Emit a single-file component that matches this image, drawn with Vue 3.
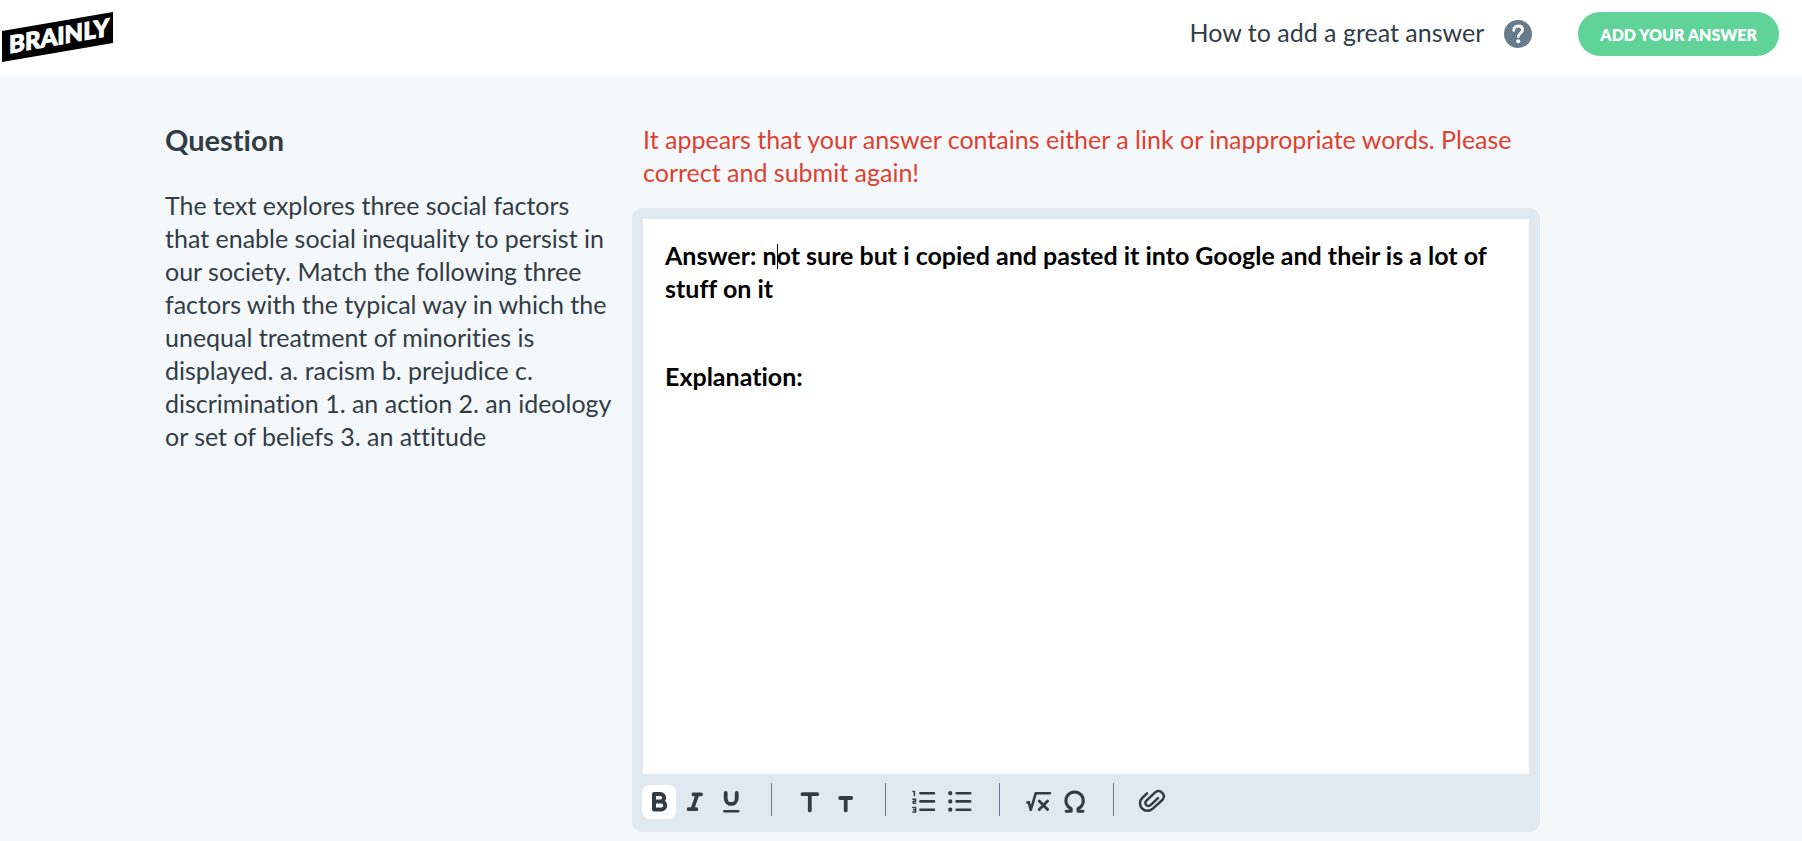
<script setup>
import { ref } from 'vue'

const error = ref('It appears that your answer contains either a link or inappropriate words. Please correct and submit again!')

const question = ref('The text explores three social factors that enable social inequality to persist in our society. Match the following three factors with the typical way in which the unequal treatment of minorities is displayed. a. racism b. prejudice c. discrimination 1. an action 2. an ideology or set of beliefs 3. an attitude')

const groups = [
    ['bold', 'italic', 'underline'],
    ['heading', 'subheading'],
    ['ordered list', 'bullet list'],
    ['equation', 'symbols'],
    ['attachment']
]

const active = ref('bold')

function toggle(tool) {
    active.value = active.value === tool ? '' : tool
}
</script>

<template>
    <div class="page">
        <header class="header">
            <a href="#" class="logo" aria-label="Brainly">
                <svg width="116" height="64" viewBox="0 0 116 64">
                    <polygon points="2,31 113,12 113,43 2,62" fill="#000" />
                    <text class="logo-text" x="9" y="55" transform="skewY(-10)">BRAINLY</text>
                </svg>
            </a>
            <a href="#" class="help">
                <span>How to add a great answer</span>
                <svg width="28" height="28" viewBox="0 0 28 28">
                    <circle cx="14" cy="14" r="14" fill="#687b8c" />
                    <path d="M9.7 10.4c0-2.7 1.8-4.4 4.4-4.4s4.4 1.6 4.4 4c0 3.3-4.2 3.2-4.2 6.6" fill="none" stroke="#fff" stroke-width="2.8" stroke-linecap="round" />
                    <circle cx="14.2" cy="21.3" r="2" fill="#fff" />
                </svg>
            </a>
            <button type="button" class="submit">ADD YOUR ANSWER</button>
        </header>

        <main class="content">
            <section class="question">
                <h1>Question</h1>
                <p>{{ question }}</p>
            </section>

            <section class="answer">
                <p class="error" role="alert">{{ error }}</p>
                <div class="editor">
                    <div class="editor-text" contenteditable="true" role="textbox" aria-multiline="true" aria-label="Your answer" spellcheck="false">
                        <p>Answer: n<span class="caret"></span>ot sure but i copied and pasted it into Google and their is a lot of stuff on it</p>
                        <p><br></p>
                        <p>Explanation:</p>
                    </div>
                    <div class="toolbar" role="toolbar" aria-label="Formatting">
                        <div v-for="group in groups" :key="group[0]" class="group">
                            <button
                                v-for="tool in group"
                                :key="tool"
                                type="button"
                                class="tool"
                                :class="active === tool && 'tool-active'"
                                :aria-label="tool"
                                :aria-pressed="active === tool"
                                @click="toggle(tool)"
                            >
                                <svg width="34" height="34" viewBox="0 0 34 34">
                                    <g v-if="tool === 'bold'" stroke-width="4">
                                        <path d="M12 9h6.4a3.7 3.7 0 0 1 0 7.4H12zM12 16.4h7.2a4 4 0 0 1 0 8H12z" />
                                    </g>
                                    <g v-else-if="tool === 'italic'" stroke-width="3.8">
                                        <path d="M15.4 9.3h7.6M10.6 24.2h7.8M19.4 9.5l-5 14.5" />
                                    </g>
                                    <g v-else-if="tool === 'underline'">
                                        <path d="M11.7 7.8v5.6a5.5 5.5 0 0 0 11 0V7.8" stroke-width="3.8" />
                                        <path d="M10.4 26.2h13.8" stroke-width="2.6" />
                                    </g>
                                    <g v-else-if="tool === 'heading'" stroke-width="3.8">
                                        <path d="M10.4 9.2h14.8M17.8 9.2v16.2" />
                                    </g>
                                    <g v-else-if="tool === 'subheading'" stroke-width="3.8">
                                        <path d="M12.2 13h11M17.7 13v12.4" />
                                    </g>
                                    <g v-else-if="tool === 'ordered list'">
                                        <path d="M14.4 8.2h13.6M14.4 16.4h13.6M14.4 24.7h13.6" stroke-width="2.6" />
                                        <path d="M7 6.4h1.4v4.2M6.8 14.3h2.8v1.9H7.2v2.1h2.6M6.8 22.5h2.8v4.4H6.8M7.6 24.7h2" stroke-width="1.5" />
                                    </g>
                                    <g v-else-if="tool === 'bullet list'">
                                        <path d="M14.6 8.2h13.6M14.6 16.4h13.6M14.6 24.7h13.6" stroke-width="2.6" />
                                        <path d="M8.2 8.2h.1M8.2 16.4h.1M8.2 24.7h.1" stroke-width="4.2" />
                                    </g>
                                    <g v-else-if="tool === 'equation'">
                                        <path d="M7.4 17.6l1.4-.4 2 7.6 5-16.6h14" stroke-width="2.6" />
                                        <path d="M19.2 16l8.4 8.6M27.6 16l-8.4 8.6" stroke-width="2.8" />
                                    </g>
                                    <g v-else-if="tool === 'symbols'" stroke-width="3">
                                        <path d="M10.2 26.2h5v-2.6a8.7 8.7 0 1 1 6.8 0v2.6h5" />
                                    </g>
                                    <g v-else stroke-width="2.5">
                                        <path d="M13 8.4L8.2 13a7.4 7.4 0 0 0 10.6 10.6l9.8-8.8a5.3 5.3 0 0 0-7.2-7.6l-9 8.4a3 3 0 0 0 4.2 4.6l7.4-7" />
                                    </g>
                                </svg>
                            </button>
                        </div>
                    </div>
                </div>
            </section>
        </main>
    </div>
</template>

<style>
body {
    margin: 0;
    background-color: #f4f8fb;
}
</style>

<style scoped>
.page {
    font-family: Lato, "Open Sans", sans-serif;
    font-size: 25px;
    line-height: 33px;
    font-variant-ligatures: none;
    color: #323c45;
    min-height: 100vh;
}

.header {
    display: flex;
    align-items: center;
    height: 76px;
    box-sizing: border-box;
    padding: 0 23px 8px 0;
    background-color: #fff;
}

.logo {
    align-self: flex-start;
    height: 64px;
    margin-right: auto;
}

.logo svg {
    display: block;
}

.logo-text {
    font-size: 24px;
    font-weight: 900;
    fill: #fff;
    stroke: #fff;
    stroke-width: 1;
}

.help {
    display: flex;
    align-items: center;
    gap: 20px;
    margin-right: 46px;
    color: inherit;
    text-decoration: none;
}

.help span {
    padding-bottom: 4px;
}

.submit {
    height: 44px;
    padding: 0 22px;
    border: none;
    border-radius: 22px;
    background-color: #60d399;
    color: #fff;
    font-family: inherit;
    font-size: 16px;
    font-weight: 800;
    cursor: pointer;
}

.content {
    display: grid;
    grid-template-columns: 449px 1fr;
    column-gap: 18px;
    padding: 47px 262px 9px 165px;
}

.question h1 {
    margin: 0 0 33px;
    font-size: 29px;
    line-height: 33px;
}

.question p {
    margin: 0;
}

.error {
    margin: 0 0 19px;
    padding: 0 11px;
    color: #e0402f;
}

.editor {
    padding: 11px 11px 0;
    border-radius: 11px;
    background-color: #e0e9f0;
}

.editor-text {
    box-sizing: border-box;
    min-height: 555px;
    padding: 20px 22px;
    background-color: #fff;
    color: #000;
    font-weight: bold;
    outline: none;
}

.editor-text p {
    margin: 0 0 11px;
}

.caret {
    position: relative;
}

.caret::after {
    content: "";
    position: absolute;
    top: 4px;
    left: 0;
    width: 1px;
    height: 25px;
    background-color: #000;
}

.toolbar {
    display: flex;
    align-items: center;
    height: 58px;
    box-sizing: border-box;
    margin-left: -1px;
    padding-bottom: 3px;
}

.group {
    display: flex;
    align-items: center;
    gap: 2px;
}

.group:not(:last-child)::after {
    content: "";
    width: 1px;
    height: 33px;
    margin: 0 20px 4px 21px;
    background-color: #687b8c;
}

.tool {
    width: 34px;
    height: 34px;
    padding: 0;
    border: none;
    border-radius: 8px;
    background-color: transparent;
    cursor: pointer;
}

.tool-active {
    background-color: #fff;
}

.tool svg {
    display: block;
    fill: none;
    stroke: #323c45;
    stroke-linecap: round;
    stroke-linejoin: round;
}
</style>
